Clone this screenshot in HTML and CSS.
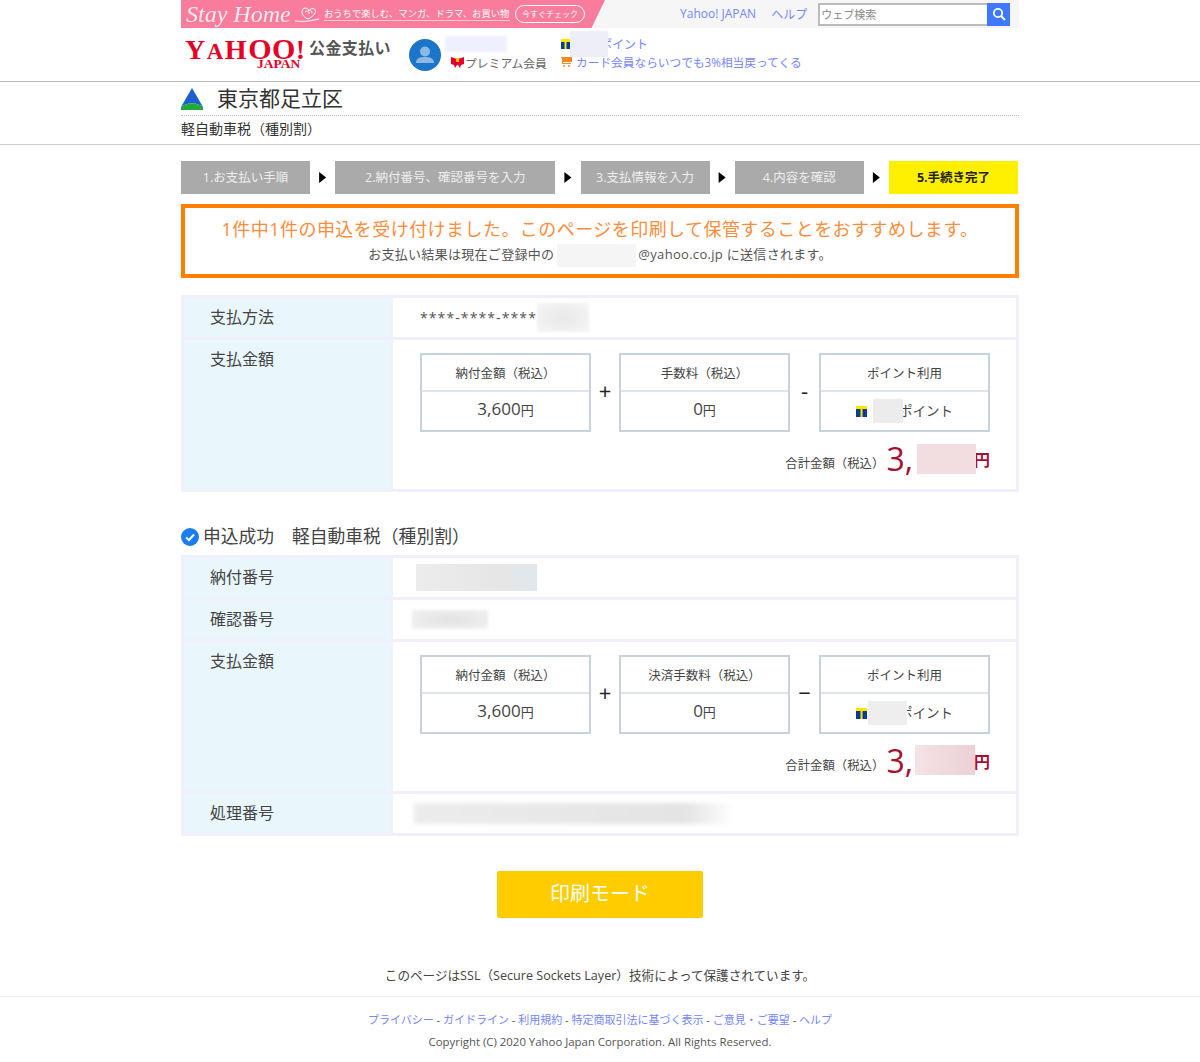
FILE: index.html
```html
<!DOCTYPE html>
<html lang="ja">
<head>
  <meta charset="UTF-8">
  <title>公金支払い</title>
  <link rel="stylesheet" href="styles.css">
</head>
<body>
  <div class="wrap topbar">
    <div class="banner">
      <span class="stay">Stay Home</span>
      <svg class="heart" width="26" height="16" viewBox="0 0 26 16"><path d="M1 15c8 1 16 0 24-2M8 6c0-5 6-5 7-1 2-4 8-3 6 2-1 3-5 5-7 6-3-1-6-4-6-7zM11 6c2-2 5 0 4 2M14 4c2 0 4 1 4 3" fill="none" stroke="#fff" stroke-width="1"/></svg>
      <span class="banner-text">おうちで楽しむ、マンガ、ドラマ、お買い物</span>
      <span class="banner-btn">今すぐチェック</span>
    </div>
    <div class="toplinks">
      <a href="#">Yahoo! JAPAN</a>
      <a href="#">ヘルプ</a>
    </div>
    <div class="search">
      <input type="text" placeholder="ウェブ検索">
      <button type="button">
        <svg width="14" height="14" viewBox="0 0 14 14"><circle cx="6" cy="6" r="4.200" fill="none" stroke="#fff" stroke-width="1.800"/><path d="M9 9l4 4" stroke="#fff" stroke-width="2"/></svg>
      </button>
    </div>
  </div>

  <div class="header-line">
    <div class="wrap header">
      <div class="logo">
        <div class="logo-main">Y<small>A</small>H<span>OO</span>!</div>
        <div class="logo-sub">JAPAN</div>
      </div>
      <div class="service">公金支払い</div>
      <svg class="avatar" width="32" height="32" viewBox="0 0 32 32"><circle cx="16" cy="16" r="16" fill="#1b75c9"/><circle cx="16" cy="12.500" r="5" fill="#8db9e4"/><path d="M7 24c0-5 4-6 9-6s9 1 9 6z" fill="#8db9e4"/></svg>
      <div class="member">
        <div class="blur blur-name"></div>
        <div class="premium">
          <svg width="13" height="12" viewBox="0 0 13 12"><path d="M0 1l6 2 1 0 6-2v7l-3 1-1 3-2-3h-1l-2 3-1-3-3-1z" fill="#e60027"/><rect x="5" y="2" width="3" height="4" fill="#f5c400"/></svg>
          プレミアム会員
        </div>
      </div>
      <div class="points">
        <div class="points-row">
          <svg class="tmark" width="9" height="10" viewBox="0 0 9 10"><rect width="9" height="10" fill="#ffe600"/><rect y="3" width="9" height="7" fill="#0a3c96"/><rect x="3.500" y="3" width="2" height="7" fill="#ffe600"/></svg>
          <span class="blur blur-pts"></span>
          <a href="#">ポイント</a>
        </div>
        <div class="points-row card-row">
          <svg width="11" height="11" viewBox="0 0 11 11"><path d="M0 1h11v5H2v1h8v1H1V2H0z" fill="#f08a24"/><circle cx="3" cy="10" r="1" fill="#f08a24"/><circle cx="8" cy="10" r="1" fill="#f08a24"/></svg>
          <a href="#">カード会員ならいつでも3%相当戻ってくる</a>
        </div>
      </div>
    </div>
  </div>

  <div class="title-line">
    <div class="wrap">
      <div class="city">
        <svg width="24" height="24" viewBox="0 0 24 24"><path d="M12 1L23 20C16 15 8 15 1 20z" fill="#1c5fd0"/><path d="M1 20c7-5 15-5 22 0v3H1z" fill="#22a83c"/></svg>
        <span>東京都足立区</span>
      </div>
      <div class="subtitle">軽自動車税（種別割）</div>
    </div>
  </div>

  <div class="wrap">
    <div class="steps">
      <div class="step step-s">1.お支払い手順</div>
      <div class="arrow"></div>
      <div class="step step-l">2.納付番号、確認番号を入力</div>
      <div class="arrow"></div>
      <div class="step step-s">3.支払情報を入力</div>
      <div class="arrow"></div>
      <div class="step step-s">4.内容を確認</div>
      <div class="arrow"></div>
      <div class="step step-s step-on">5.手続き完了</div>
    </div>

    <div class="notice">
      <p class="notice-title">1件中1件の申込を受け付けました。このページを印刷して保管することをおすすめします。</p>
      <p class="notice-sub">お支払い結果は現在ご登録中の<span class="blur blur-mail"></span>@yahoo.co.jp に送信されます。</p>
    </div>

    <div class="info">
      <div class="info-label row-s">支払方法</div>
      <div class="info-value row-s card-no">****-****-****<span class="blur blur-card"></span></div>
      <div class="info-label">支払金額</div>
      <div class="info-value">
        <div class="calc">
          <div class="calc-box">
            <div class="calc-head">納付金額（税込）</div>
            <div class="calc-body">3,600<small>円</small></div>
          </div>
          <div class="op op-first">+</div>
          <div class="calc-box">
            <div class="calc-head">手数料（税込）</div>
            <div class="calc-body">0<small>円</small></div>
          </div>
          <div class="op">-</div>
          <div class="calc-box">
            <div class="calc-head">ポイント利用</div>
            <div class="calc-body calc-pts">
              <svg class="tmark" width="11" height="11" viewBox="0 0 11 11"><rect width="11" height="11" fill="#ffe600"/><rect y="3" width="11" height="8" fill="#0a3c96"/><rect x="4.500" y="3" width="2" height="8" fill="#ffe600"/></svg>
              <span class="blur blur-use"></span><small class="pts-text">ポイント</small>
            </div>
          </div>
        </div>
        <div class="total">
          <span class="total-label">合計金額（税込）</span>
          <span class="total-num">3,</span><span class="blur blur-total"></span><span class="total-yen">円</span>
        </div>
      </div>
    </div>

    <h3 class="result">
      <svg width="18" height="18" viewBox="0 0 18 18"><circle cx="9" cy="9" r="9" fill="#1a7ef0"/><path d="M5 9.500l3 2.500 5-5.500" fill="none" stroke="#fff" stroke-width="2"/></svg>
      <span>申込成功　軽自動車税（種別割）</span>
    </h3>

    <div class="info">
      <div class="info-label row-s">納付番号</div>
      <div class="info-value row-s"><span class="blur blur-no1"></span></div>
      <div class="info-label row-s">確認番号</div>
      <div class="info-value row-s"><span class="blur blur-no2"></span></div>
      <div class="info-label">支払金額</div>
      <div class="info-value">
        <div class="calc">
          <div class="calc-box">
            <div class="calc-head">納付金額（税込）</div>
            <div class="calc-body">3,600<small>円</small></div>
          </div>
          <div class="op op-first">+</div>
          <div class="calc-box">
            <div class="calc-head">決済手数料（税込）</div>
            <div class="calc-body">0<small>円</small></div>
          </div>
          <div class="op">−</div>
          <div class="calc-box">
            <div class="calc-head">ポイント利用</div>
            <div class="calc-body calc-pts">
              <svg class="tmark" width="11" height="11" viewBox="0 0 11 11"><rect width="11" height="11" fill="#ffe600"/><rect y="3" width="11" height="8" fill="#0a3c96"/><rect x="4.500" y="3" width="2" height="8" fill="#ffe600"/></svg>
              <span class="blur blur-use2"></span><small class="pts-text">ポイント</small>
            </div>
          </div>
        </div>
        <div class="total">
          <span class="total-label">合計金額（税込）</span>
          <span class="total-num">3,</span><span class="blur blur-total2"></span><span class="total-yen">円</span>
        </div>
      </div>
      <div class="info-label row-s">処理番号</div>
      <div class="info-value row-s"><span class="blur blur-no3"></span></div>
    </div>

    <div class="print-area">
      <a class="print-btn" href="#">印刷モード</a>
    </div>

    <p class="ssl">このページはSSL（Secure Sockets Layer）技術によって保護されています。</p>
  </div>

  <div class="footer">
    <div class="footer-links">
      <a href="#">プライバシー</a> - <a href="#">ガイドライン</a> - <a href="#">利用規約</a> - <a href="#">特定商取引法に基づく表示</a> - <a href="#">ご意見・ご要望</a> - <a href="#">ヘルプ</a>
    </div>
    <div class="copyright">Copyright (C) 2020 Yahoo Japan Corporation. All Rights Reserved.</div>
  </div>
</body>
</html>
```

FILE: styles.css
```css
* {
  box-sizing: border-box;
}

body {
  margin: 0;
  background: #fff;
  color: #444;
  font-family: "Open Sans", "Noto Sans CJK JP", sans-serif;
  font-size: 13px;
}

a {
  color: #7486ff;
  text-decoration: none;
}

p {
  margin: 0;
}

.wrap {
  width: 838px;
  margin: 0 auto;
}

/* top bar */
.topbar {
  display: flex;
  align-items: center;
  height: 28px;
  background: #f6f6f6;
}

.banner {
  display: flex;
  align-items: center;
  flex: none;
  width: 424px;
  height: 28px;
  padding-left: 5px;
  background: #fa7c9c;
  color: #fff;
  clip-path: polygon(0 0, 100% 0, 96.800% 100%, 0 100%);
}

.stay {
  flex: none;
  width: 107px;
  font-family: "Liberation Serif", serif;
  font-style: italic;
  font-size: 24px;
  line-height: 28px;
  white-space: nowrap;
  opacity: 0.85;
}

.heart {
  flex: none;
  margin-left: 1px;
  margin-right: 4px;
}

.banner-text {
  flex: none;
  width: 186px;
  border-bottom: 1px solid #fcc;
  font-size: 9.300px;
  line-height: 13px;
  white-space: nowrap;
}

.banner-btn {
  flex: none;
  margin-left: 5px;
  padding: 0 6px;
  border: 1px solid #fff;
  border-radius: 10px;
  font-size: 8px;
  line-height: 16px;
  white-space: nowrap;
}

.toplinks {
  display: flex;
  gap: 15px;
  margin-left: 75px;
  font-size: 12px;
}

.search {
  display: flex;
  margin-left: 11px;
}

.search input {
  width: 169px;
  height: 23px;
  padding: 0 1px;
  border: 2px solid #bbb;
  border-right: 0;
  background: #fff;
  font-family: inherit;
  font-size: 11px;
}

.search input::placeholder {
  color: #888;
}

.search button {
  display: flex;
  align-items: center;
  justify-content: center;
  width: 23px;
  height: 23px;
  padding: 0;
  border: 0;
  background: #3f78ff;
}

/* header */
.header-line {
  border-bottom: 1px solid #bbb;
}

.header {
  display: flex;
  align-items: flex-start;
  height: 53px;
}

.logo {
  width: 128px;
  margin-top: 11px;
  color: #e60027;
  font-family: "Liberation Serif", serif;
  font-weight: bold;
}

.logo-main {
  height: 19px;
  padding-left: 4px;
  font-size: 28px;
  letter-spacing: 1.500px;
  line-height: 19px;
  white-space: nowrap;
}

.logo-main small {
  font-size: 23px;
}

.logo-main span {
  font-size: 30px;
  letter-spacing: 0.4px;
}

.logo-sub {
  height: 10px;
  margin-left: 76px;
  font-size: 13.500px;
  line-height: 12px;
}

.service {
  margin-top: 8px;
  color: #555;
  font-size: 16px;
  font-weight: bold;
  letter-spacing: 0.4px;
  line-height: 24px;
  white-space: nowrap;
}

.avatar {
  flex: none;
  margin-top: 11px;
  margin-left: 18px;
}

.member {
  flex: none;
  width: 116px;
  margin-left: 4px;
}

.premium {
  display: flex;
  align-items: center;
  gap: 1px;
  height: 16px;
  margin-top: 2px;
  margin-left: 6px;
  color: #666;
  font-size: 11.800px;
  white-space: nowrap;
}

.points {
  margin-top: 7px;
}

.points-row {
  display: flex;
  align-items: center;
  height: 18px;
  font-size: 12px;
  white-space: nowrap;
}

.card-row {
  gap: 4px;
  margin-top: -1px;
  font-size: 11.700px;
}

.card-row svg {
  flex: none;
}

/* redacted parts */
.blur {
  display: inline-block;
  background: #f0f0f0;
  filter: blur(0.5px);
}

.blur-name {
  display: block;
  width: 62px;
  height: 16px;
  margin-top: 8px;
  background: #eef0fd;
  filter: blur(1.500px);
}

.blur-pts {
  position: relative;
  z-index: 1;
  width: 38px;
  height: 26px;
  margin-right: -8px;
  background: #eeeef8;
}

.blur-mail {
  width: 79px;
  height: 23px;
  margin: 0 2px 0 3px;
  vertical-align: middle;
  background: #f5f5f5;
}

.blur-card {
  width: 52px;
  height: 29px;
  background: radial-gradient(#e8e8e8, #f6f6f6);
  filter: blur(1px);
}

.blur-use {
  position: relative;
  z-index: 1;
  width: 30px;
  height: 24px;
  margin-left: 6px;
  margin-right: -4px;
  background: #ececec;
}

.blur-use2 {
  position: relative;
  z-index: 1;
  width: 39px;
  height: 24px;
  margin-left: 1px;
  margin-right: -8px;
  background: #eeeeee;
}

.blur-no1 {
  width: 121px;
  height: 27px;
  margin-left: -4px;
  background: linear-gradient(90deg, #ececec, #e6e6e6 70%, #dfe8ee);
}

.blur-no2 {
  width: 76px;
  height: 19px;
  margin-left: -8px;
  background: radial-gradient(#e2e2e2, #f2f2f2);
  filter: blur(1.500px);
}

.blur-no3 {
  width: 320px;
  height: 21px;
  margin-left: -6px;
  background: linear-gradient(90deg, #ececec, #e4e4e4 85%, #fff);
  filter: blur(2px);
}

/* city title */
.title-line {
  border-bottom: 1px solid #ccc;
}

.city {
  display: flex;
  align-items: center;
  gap: 13px;
  height: 34px;
  border-bottom: 1px dotted #bbb;
  color: #333;
  font-size: 21px;
}

.city svg {
  margin-left: -1px;
}

.city span {
  margin-top: -4px;
}

.subtitle {
  height: 28px;
  color: #333;
  font-size: 14px;
  line-height: 25px;
}

/* steps */
.steps {
  display: flex;
  align-items: center;
  width: 837px;
  margin-top: 16px;
}

.step {
  height: 33px;
  background: #aaa;
  color: #eee;
  font-size: 12.500px;
  line-height: 33px;
  text-align: center;
  white-space: nowrap;
}

.step-s {
  width: 129px;
}

.step-l {
  width: 220px;
}

.step-on {
  background: #fff000;
  color: #222;
  font-weight: bold;
}

.arrow {
  flex: 1;
  height: 11px;
  background: #000;
  clip-path: polygon(calc(50% - 3.500px) 0, calc(50% + 3.500px) 50%, calc(50% - 3.500px) 100%);
}

/* notice */
.notice {
  height: 74px;
  margin-top: 10px;
  padding-top: 8px;
  border: 4px solid #ff8000;
  text-align: center;
}

.notice-title {
  color: #ff8c3a;
  font-size: 18px;
  letter-spacing: 0.45px;
  line-height: 26px;
}

.notice-sub {
  height: 24px;
  color: #555;
  font-size: 13px;
  letter-spacing: 0.3px;
  line-height: 24px;
}

/* info tables */
.info {
  display: grid;
  grid-template-columns: 207px 1fr;
  gap: 3px 2px;
  margin-top: 17px;
  padding: 3px;
  background: #f0effb;
}

.info-label {
  padding: 8px 0 0 26px;
  background: #e9f6fc;
  color: #444;
  font-size: 16px;
  line-height: 22px;
}

.info-value {
  padding: 0 26px 0 27px;
  background: #fff;
  overflow: hidden;
}

.row-s {
  height: 39px;
}

.info-value.row-s {
  display: flex;
  align-items: center;
}

.card-no {
  color: #555;
  font-size: 14px;
  letter-spacing: 1.100px;
}

.calc {
  display: flex;
  justify-content: space-between;
  padding-top: 13px;
}

.calc-box {
  flex: none;
  width: 171px;
  height: 79px;
  border: 2px solid #c5d3dc;
  text-align: center;
}

.calc-head {
  height: 37px;
  border-bottom: 2px solid #dde6ec;
  color: #444;
  font-size: 12.500px;
  line-height: 38px;
  white-space: nowrap;
}

.calc-body {
  height: 38px;
  color: #444;
  font-size: 17px;
  line-height: 34px;
}

.calc-body small {
  font-size: 13px;
}

.calc-pts {
  display: flex;
  align-items: center;
  padding-left: 35px;
}

.calc-pts small.pts-text {
  font-size: 13.500px;
}

.op {
  flex: 1;
  padding-top: 23px;
  color: #222;
  font-size: 22px;
  line-height: 28px;
  text-align: center;
}

.op-first {
  flex: 0 0 28px;
}

.total {
  display: flex;
  align-items: center;
  justify-content: flex-end;
  height: 57px;
  padding-bottom: 3px;
}

.total-label {
  margin-right: 2px;
  margin-top: 8px;
  color: #444;
  font-size: 12.400px;
}

.total-num {
  color: #a8102f;
  font-size: 32px;
  line-height: 32px;
}

.total-yen {
  margin-left: -2px;
  color: #a8102f;
  font-size: 16px;
  font-weight: bold;
}

.blur-total {
  position: relative;
  z-index: 1;
  width: 59px;
  height: 30px;
  margin-left: 4px;
  background: #f2dde1;
}

.blur-total2 {
  position: relative;
  z-index: 1;
  width: 60px;
  height: 30px;
  margin-left: 2px;
  margin-right: 1px;
  margin-bottom: 3px;
  background: linear-gradient(90deg, #f4e3e6, #ecd0d6);
}

/* section title */
.result {
  display: flex;
  align-items: center;
  gap: 4px;
  height: 30px;
  margin: 30px 0 0;
  color: #444;
  font-size: 17.800px;
  font-weight: normal;
}

.result span {
  margin-top: -5px;
}

.result + .info {
  margin-top: 3px;
}

/* button */
.print-area {
  display: flex;
  justify-content: center;
  margin-top: 35px;
}

.print-btn {
  display: block;
  width: 206px;
  height: 47px;
  border-radius: 2px;
  background: #ffcc00;
  color: #fff;
  font-size: 20px;
  line-height: 46px;
  text-align: center;
}

.ssl {
  margin-top: 48px;
  height: 30px;
  color: #444;
  font-size: 12.600px;
  line-height: 20px;
  text-align: center;
}

/* footer */
.footer {
  border-top: 1px solid #eee;
  padding-top: 14px;
  text-align: center;
  font-size: 11px;
}

.footer-links {
  line-height: 18px;
  color: #555;
}

.copyright {
  margin-top: 4px;
  color: #555;
  font-size: 11.400px;
  line-height: 18px;
}
```
